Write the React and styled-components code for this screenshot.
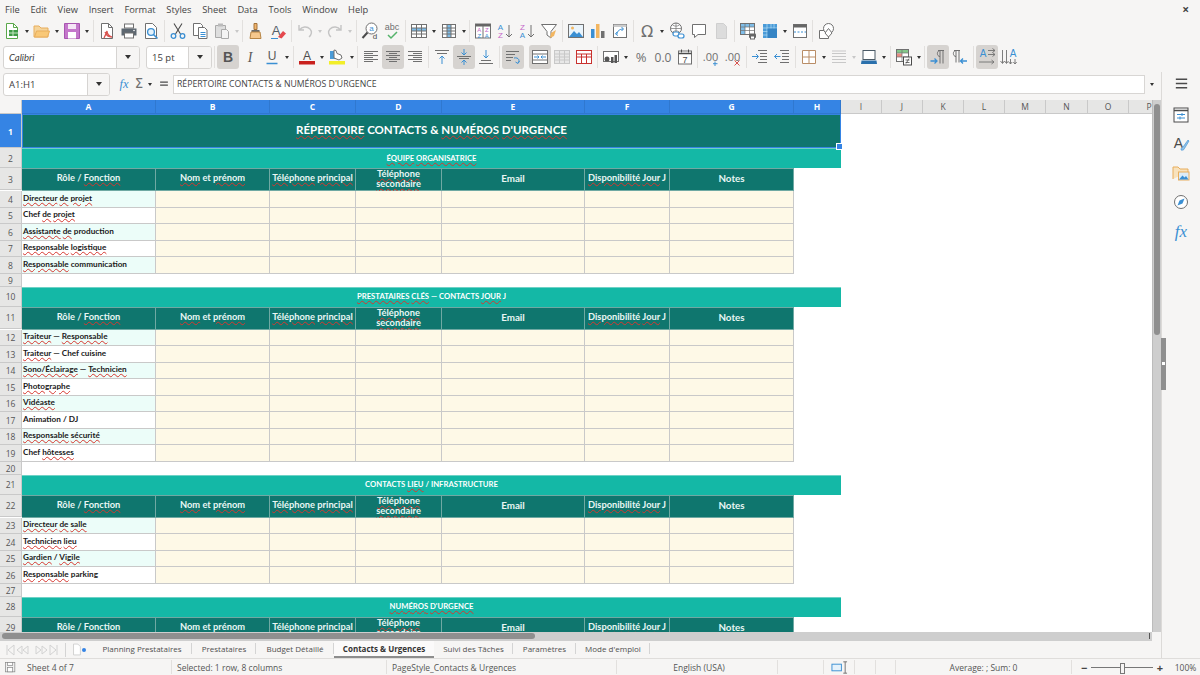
import React from 'react'
import styled, { createGlobalStyle } from 'styled-components'

const BLUE = '#3a8fd3'
const GREY = '#707070'
const DARK = '#4b4b4b'
const LIGHT = '#c4c4c4'
const UI_FONT = '"Open Sans", "Noto Sans", sans-serif'
const SHEET_FONT = 'Lato, "Liberation Sans", sans-serif'

const GlobalStyle = createGlobalStyle`
  html, body { margin: 0; padding: 0; background: #f6f5f4; overflow: hidden; }
  * { box-sizing: border-box; }
`

const Letter = ({ x = 9, y = 13, size = 12, color = DARK, weight = 400, style = 'normal', family = 'Liberation Sans', children }) => (
  <text x={x} y={y} fontSize={size} fill={color} fontWeight={weight} fontStyle={style} fontFamily={family} textAnchor="middle">{children}</text>
)

const TEXT_ROWS = [3.5, 5.5, 7.5, 9.5, 11.5, 13.5]

const ICONS = {
  new: <><path d="M3.5 1.5h7l4 4v11h-11z" fill="#fff" stroke="#5aa84a" /><path d="M10.5 1.5v4h4" fill="none" stroke="#5aa84a" /><rect x="6" y="8" width="9" height="6" fill="#3f9b46" /><path d="M6 11h9M10 8v6" stroke="#c5e6c0" /></>,
  open: <><path d="M1 15V4h5l2 2h7v9z" fill="#f5d49a" stroke="#e8ad5c" /><path d="M1.5 15l2-6h13l-2 6z" fill="#f9c877" stroke="#e8ad5c" /></>,
  save: <><path d="M1.5 1.5h15v15h-15z" fill="#c477cb" stroke="#a855b0" /><rect x="5" y="2" width="8" height="5" fill="#f5e6f6" /><rect x="5" y="10" width="8" height="6.5" fill="#fff" /></>,
  pdf: <><path d="M3.5 1.5h7l4 4v11h-11z" fill="#fff" stroke={GREY} /><path d="M10.5 1.5v4h4" fill="none" stroke={GREY} /><path d="M7 10c2 4 3 5 7 5-3-1-5-3-5-6-1 3-2 5-3 7" fill="none" stroke="#d9534f" strokeWidth="1.3" /></>,
  print: <><rect x="4.5" y="2" width="9" height="4" fill="#fff" stroke={GREY} /><path d="M1.5 6.5h15v7h-15z" fill="#5d6770" /><rect x="4.5" y="11" width="9" height="5" fill="#fff" stroke={GREY} /><circle cx="14" cy="8.5" r=".8" fill="#fff" /></>,
  preview: <><path d="M3.5 1.5h7l4 4v11h-11z" fill="#fff" stroke={GREY} /><circle cx="9" cy="10" r="3.4" fill="#e5f2fb" stroke={BLUE} strokeWidth="1.3" /><path d="M11.5 12.5l4 4" stroke={BLUE} strokeWidth="1.6" /></>,
  cut: <><path d="M5 1.5l6.5 10.5M13 1.5L6.5 12" stroke={DARK} fill="none" strokeWidth="1.1" /><circle cx="4.5" cy="14" r="2.3" fill="none" stroke={BLUE} strokeWidth="1.3" /><circle cx="13.5" cy="14" r="2.3" fill="none" stroke={BLUE} strokeWidth="1.3" /></>,
  copy: <><path d="M2.5 1.5h7l2 2v10h-9z" fill="#fff" stroke={GREY} /><path d="M7.5 5.5h6l2.5 2.5v8.5h-8.5z" fill="#fff" stroke={GREY} /><path d="M9.5 10.5h5M9.5 12.5h5M9.5 14.5h5" stroke={BLUE} /></>,
  paste: <><path d="M2.5 3.5h10v12h-10z" fill="#dedede" stroke="#aaa" /><rect x="5" y="1.5" width="5" height="3" fill="#bbb" /><path d="M8.5 7.5h5l2 2v7h-7z" fill="#f4f4f4" stroke="#aaa" /></>,
  clone: <><path d="M7 1.5h3v6H7z" fill="#f0b46c" stroke="#a4733a" /><path d="M4.5 8h8v2h-8z" fill="#6b6b6b" /><path d="M4 10h9l1 6.5H3z" fill="#f6c88d" stroke="#b78545" /></>,
  clear: <><Letter x={7} y={13} size={13} color="#54606a">A</Letter><path d="M9 15l5-6 3 2.5-4.5 5z" fill="#e5484d" /><path d="M2 16.5h7" stroke={BLUE} /></>,
  undo: <path d="M3 3v5h5M3.5 8C6 4.5 11 4 14 7c2.5 2.5 1.5 6-1 8" fill="none" stroke={LIGHT} strokeWidth="1.4" />,
  redo: <path d="M15 3v5h-5M14.5 8C12 4.5 7 4 4 7c-2.5 2.5-1.5 6 1 8" fill="none" stroke={LIGHT} strokeWidth="1.4" />,
  find: <><circle cx="10.5" cy="6.5" r="5.5" fill="#fff" stroke={GREY} /><path d="M6.5 10.5l-5 5.5" stroke={DARK} strokeWidth="2" /><Letter x={10.5} y={9} size={8} color={BLUE}>a</Letter><Letter x={14} y={17} size={8} color={DARK}>d</Letter></>,
  spell: <><Letter x={9} y={8} size={9} color={GREY}>abc</Letter><path d="M5 13l3 3 6-6" fill="none" stroke="#54b36a" strokeWidth="1.5" /></>,
  grid: <><rect x="1.5" y="2.5" width="15" height="13" fill="#fff" stroke={GREY} /><rect x="2" y="6" width="14" height="3" fill="#7fbde8" /><path d="M1.5 6h15M1.5 9h15M1.5 12h15M6.5 2.5v13M11.5 2.5v13" stroke={GREY} /></>,
  col: <><rect x="2.5" y="2.5" width="13" height="13" fill="#fff" stroke={GREY} /><rect x="7" y="3" width="4" height="12" fill="#7fbde8" /><path d="M2.5 6h13M2.5 9h13M2.5 12h13M7 2.5v13M11 2.5v13" stroke={GREY} /></>,
  sort: <><rect x="1.5" y="2" width="15" height="14" fill="#fff" stroke={GREY} /><rect x="1.5" y="2" width="15" height="2.5" fill="#666" /><path d="M9 4v12" stroke={GREY} /><Letter x={5.3} y={10} size={6} color="#c466c8">A</Letter><Letter x={5.3} y={15.5} size={6} color={BLUE}>Z</Letter><Letter x={12.8} y={10} size={6} color="#c466c8">Z</Letter><Letter x={12.8} y={15.5} size={6} color={BLUE}>A</Letter></>,
  asc: <><Letter x={4.5} y={8} size={8} color={BLUE}>A</Letter><Letter x={4.5} y={16} size={8} color="#c466c8">Z</Letter><path d="M13 3v12M10 12l3 3 3-3" fill="none" stroke={GREY} /></>,
  desc: <><Letter x={4.5} y={8} size={8} color="#c466c8">Z</Letter><Letter x={4.5} y={16} size={8} color={BLUE}>A</Letter><path d="M13 3v12M10 12l3 3 3-3" fill="none" stroke={GREY} /></>,
  filter: <><path d="M1.5 2.5h15l-5.5 7v6.5l-4-3v-3.5z" fill="#fff" stroke={GREY} /><path d="M10 16l1-5 5-3-2 6z" fill="#f2b661" /></>,
  image: <><rect x="1.5" y="2.5" width="15" height="13" fill="#eaf4fb" stroke={GREY} /><circle cx="5.5" cy="6" r="1.5" fill="#f2b661" /><path d="M2 15l5-6 3 3 2-2 4 5z" fill={BLUE} /></>,
  chart: <><rect x="2" y="7" width="3.5" height="9" fill={BLUE} /><rect x="7" y="2" width="3.5" height="14" fill="#f2b661" /><rect x="12" y="9" width="3.5" height="7" fill={GREY} /></>,
  pivot: <><rect x="2.5" y="2.5" width="13" height="13" fill="#fff" stroke={GREY} /><rect x="2.5" y="2.5" width="13" height="2.5" fill="#ccc" /><path d="M6 12c0-3 3-5 6-5M10.5 5l2 2-2 2M6 10l-1.5 2L7 13.5" fill="none" stroke={BLUE} /></>,
  omega: <Letter x={9} y={15} size={16} color={GREY} family="DejaVu Sans">Ω</Letter>,
  link: <><circle cx="8" cy="6.5" r="5.5" fill="#fff" stroke={GREY} /><path d="M2.5 6.5h11M8 1v11M4.5 3c2 1.5 5 1.5 7 0M4.5 10c2-1.5 5-1.5 7 0" stroke={GREY} fill="none" strokeWidth=".7" /><rect x="5" y="10" width="6" height="4" rx="2" fill="#fff" stroke={BLUE} strokeWidth="1.2" /><rect x="10" y="12" width="6" height="4" rx="2" fill="#fff" stroke={BLUE} strokeWidth="1.2" /></>,
  comment: <path d="M2.5 2.5h13v10H8l-3.5 3v-3h-2z" fill="#fff" stroke={GREY} />,
  header: <path d="M4.5 1.5h7l3 3v12h-10z" fill="#dcdcdc" stroke="#cfcfcf" />,
  printArea: <><rect x="1.5" y="1.5" width="14" height="11" fill="#fff" stroke={GREY} /><rect x="2" y="2" width="13" height="3" fill="#7fbde8" /><rect x="2" y="2" width="4" height="10" fill="#7fbde8" /><path d="M1.5 5h14M1.5 8.5h14M6 1.5v11M10.5 1.5v11" stroke={GREY} strokeWidth=".7" /><rect x="10" y="11.5" width="7" height="4.5" rx="1" fill="#666" /><rect x="11.5" y="14" width="4" height="3" fill="#fff" stroke="#666" /></>,
  freeze: <><rect x="2" y="2" width="14" height="14" fill="#4a9bd8" /><path d="M2 6h14M2 9.5h14M2 13h14M6 2v14M10 2v14M13 2v14" stroke="#b6dcf5" strokeWidth=".7" /><rect x="6.5" y="6.5" width="9.5" height="9.5" fill="#3584c4" /></>,
  split: <><rect x="2.5" y="2.5" width="13" height="13" fill="#fff" stroke={GREY} /><rect x="2.5" y="2.5" width="13" height="3" fill="#666" /><path d="M3 10h12" stroke={BLUE} strokeDasharray="2 1.5" /></>,
  shapes: <><path d="M2.5 8.5h9v8h-9z" fill="#fff" stroke={GREY} /><circle cx="11.5" cy="6.5" r="5" fill="#fff" stroke={GREY} /><path d="M8 11l3.5-4.5L15 11l-3.5 4z" fill="#fff" stroke={GREY} /></>,
  bold: <Letter x={9} y={14} size={14} weight={700} color="#555">B</Letter>,
  italic: <Letter x={9} y={14} size={14} color="#5a5a5a" family="Liberation Serif" style="italic">I</Letter>,
  underline: <><Letter x={9} y={12} size={12} color="#5a5a5a">U</Letter><path d="M3.5 15.5h11" stroke={BLUE} strokeWidth="1.5" /></>,
  fontColor: <><Letter x={9} y={11.5} size={12} color={DARK}>A</Letter><rect x="1" y="13" width="16" height="3.5" fill="#c9211e" /></>,
  highlight: <><path d="M2 3h6v8H2z" fill="#4a9bd8" /><path d="M6 10V2l2 .5 1 3 4 1.5 1 3-3 2z" fill="#fff" stroke={GREY} /><rect x="1" y="13" width="16" height="3.5" fill="#f2ee28" /></>,
  alignLeft: TEXT_ROWS.map((y, i) => <path key={i} d={i % 2 ? `M2 ${y}H11` : `M2 ${y}H16`} stroke={GREY} />),
  alignCenter: TEXT_ROWS.map((y, i) => <path key={i} d={i % 2 ? `M5 ${y}H13` : `M2 ${y}H16`} stroke={GREY} />),
  alignRight: TEXT_ROWS.map((y, i) => <path key={i} d={i % 2 ? `M7 ${y}H16` : `M2 ${y}H16`} stroke={GREY} />),
  vTop: <><path d="M2 2.5h14M4 5.5h10" stroke={GREY} /><path d="M9 16V8M6.5 10.5L9 8l2.5 2.5" fill="none" stroke={BLUE} /></>,
  vCenter: <><path d="M2 8.5h14M4 10.5h10" stroke={GREY} /><path d="M9 1v6M6.5 4.5L9 7l2.5-2.5M9 17v-5M6.5 14.5L9 12l2.5 2.5" fill="none" stroke={BLUE} /></>,
  vBottom: <><path d="M2 15.5h14M4 12.5h10" stroke={GREY} /><path d="M9 2v8M6.5 7.5L9 10l2.5-2.5" fill="none" stroke={BLUE} /></>,
  wrap: <><path d="M2 3.5h13M2 6.5h9M2 9.5h7M2 12.5h5" stroke={GREY} /><path d="M10 10c5-1 6 3 4 5M15.5 13l-1.5 2.5-2.5-1.5" fill="none" stroke={BLUE} /></>,
  merge: <><rect x="1.5" y="2.5" width="15" height="13" fill="#fff" stroke={GREY} /><path d="M1.5 6h15M1.5 12h15" stroke={GREY} /><path d="M3 9h5M6.5 7.5L8 9l-1.5 1.5M15 9h-5M11.5 7.5L10 9l1.5 1.5" fill="none" stroke={BLUE} /></>,
  mergeOff: <><rect x="1.5" y="2.5" width="15" height="13" fill="#e8e8e8" stroke="#c8c8c8" /><path d="M1.5 6h15M1.5 9h15M1.5 12h15M6.5 2.5v13M11.5 2.5v13" stroke="#c8c8c8" /></>,
  unmerge: <><rect x="1.5" y="2.5" width="15" height="13" fill="#fff" stroke="#c9312e" /><path d="M1.5 6h15M1.5 9h15M6.5 6v9.5M11.5 6v9.5" stroke="#c9312e" /></>,
  currency: <><rect x="1.5" y="3.5" width="15" height="10" fill="#fff" stroke={GREY} /><circle cx="5" cy="11" r="2.5" fill="#555" /><rect x="9" y="9" width="2.5" height="6" fill="#555" /><rect x="12.5" y="7" width="2.5" height="8" fill="#555" /></>,
  percent: <Letter x={9} y={13.5} size={13} color={GREY} family="Open Sans">%</Letter>,
  number: <Letter x={9} y={13.5} size={12} color={GREY} family="Open Sans">0.0</Letter>,
  date: <><rect x="2.5" y="3" width="13" height="13" fill="#fff" stroke={GREY} /><path d="M2.5 5.5h13" stroke={DARK} strokeWidth="1.5" /><path d="M5.5 1.5v3M12.5 1.5v3" stroke={DARK} /><Letter x={9} y={14.5} size={9} color={DARK}>7</Letter></>,
  decAdd: <><Letter x={8.5} y={13} size={11} color={GREY} family="Open Sans">.00</Letter><path d="M13 13.5v4.5M11 15.7h4.5" stroke={BLUE} /></>,
  decDel: <><Letter x={8.5} y={13} size={11} color={GREY} family="Open Sans">.00</Letter><path d="M10.5 12.5l5 5M15.5 12.5l-5 5" stroke="#d9534f" /></>,
  indent: <><path d="M7 2.5h9M9 5.5h7M9 8.5h7M9 11.5h7M7 14.5h9" stroke={GREY} /><path d="M1 8.5h6M5 6l2.5 2.5L5 11" fill="none" stroke={BLUE} /></>,
  outdent: <><path d="M7 2.5h9M9 5.5h7M9 8.5h7M9 11.5h7M7 14.5h9" stroke={GREY} /><path d="M7.5 8.5h-6M4 6L1.5 8.5 4 11" fill="none" stroke={BLUE} /></>,
  border: <path d="M2.5 2.5h13v13h-13zM9 2.5v13M2.5 9h13" fill="#fff" stroke="#b98d66" />,
  lineStyle: <path d="M2 3h14M2 5.5h14M2 8.5h14M2 11.5h14M2 14.5h14" stroke="#c8c8c8" strokeWidth="1.2" />,
  borderColor: <><rect x="3" y="2.5" width="12" height="9" fill="#fff" stroke="#4b5a66" /><path d="M1.5 12.5h15l.5 3.5H1z" fill="#2a70ac" /></>,
  cond: <><rect x="1.5" y="1.5" width="12" height="12" fill="#fff" stroke={GREY} /><rect x="2" y="2" width="11" height="3" fill="#84c88a" /><rect x="2" y="5.5" width="5" height="3.5" fill="#e88d82" /><path d="M1.5 5h12M1.5 9h12M7 1.5v12" stroke={GREY} strokeWidth=".7" /><rect x="8.5" y="9" width="8" height="8" fill="#fff" stroke={DARK} /><path d="M10.5 12h4M10.5 14.5h4M14 10.5l-3 5" stroke={DARK} strokeWidth=".8" /></>,
  ltr: <><path d="M9 2.5h6M11 2.5v13M14 2.5v13M11 8.5c-3.5 0-3.5-6 0-6" fill="none" stroke={GREY} /><path d="M1.5 13h6M5.5 10.5L8 13l-2.5 2.5" fill="none" stroke={BLUE} strokeWidth="1.3" /></>,
  rtl: <><path d="M3 2.5h6M5 2.5v12M8 2.5v12M5 8.5c-3.5 0-3.5-6 0-6" fill="none" stroke={GREY} /><path d="M16 13h-6M12 10.5L9.5 13l2.5 2.5" fill="none" stroke={BLUE} strokeWidth="1.3" /></>,
  textH: <><Letter x={5} y={9} size={10} color={BLUE}>A</Letter><path d="M10 2.5h7M14.5.5l2.5 2-2.5 2M10 6.500h7M14.5 4.5l2.5 2-2.5 2M1 14h15M13.5 12l2.5 2-2.5 2" fill="none" stroke={GREY} strokeWidth=".9" /></>,
  textV: <><Letter x={13} y={9} size={10} color={BLUE}>A</Letter><path d="M2.5 2v13M.5 13l2 2.5 2-2.5M6.5 2v13M4.5 13l2 2.5 2-2.5M10.5 11v5M8.8 14l1.7 2 1.7-2M15 11v5M13.3 14l1.7 2 1.7-2" fill="none" stroke={GREY} strokeWidth=".9" /></>,
  fx: <Letter x={9} y={14} size={14} color={BLUE} family="Liberation Serif" style="italic">fx</Letter>,
  sum: <Letter x={9} y={14} size={15} color={GREY} family="DejaVu Sans">Σ</Letter>,
  equal: <path d="M4 6.5h10M4 10.5h10" stroke={DARK} strokeWidth="1.5" />,
  menu: <path d="M3 4.5h12M3 9h12M3 13.5h12" stroke={DARK} strokeWidth="1.5" />,
  properties: <><rect x="2" y="2" width="14" height="14" fill="#fff" stroke={DARK} /><path d="M2 4.5h14" stroke={DARK} strokeWidth="1.5" /><path d="M5 8.5h8M5 12h8" stroke={BLUE} /><path d="M10 7v3M8 10.5v3" stroke={BLUE} /></>,
  styles: <><Letter x={6.5} y={13} size={14} color={DARK}>A</Letter><path d="M9 15c0-2 1-3 2-3l5-7 1 1-4.5 7.5c-.5 1.5-2 2-3.5 1.5z" fill="#8ec1e8" stroke={BLUE} strokeWidth=".6" /></>,
  gallery: <><path d="M1 15V3h5l2 2h8v3" fill="#f8e2bd" stroke="#e8ad5c" /><rect x="6.5" y="8" width="10.5" height="8" fill="#dcecf8" stroke="#e8ad5c" /><path d="M7 15.5l3.5-4 2 2 1.5-1.5 2.5 3.5z" fill={BLUE} /></>,
  navigator: <><circle cx="9" cy="9" r="6.5" fill="#fff" stroke={GREY} /><path d="M12.5 5.5L10.5 10.5 5.5 12.5 7.5 7.5z" fill={BLUE} /></>,
  sideFx: <Letter x={9} y={15} size={17} color={BLUE} family="Liberation Serif" style="italic">fx</Letter>,
  saved: <><rect x="2" y="2" width="13" height="13" fill="#f0f0f0" stroke="#8a8a8a" /><rect x="5" y="2" width="7" height="4" fill="#fff" stroke="#8a8a8a" /><rect x="5" y="9" width="7" height="6" fill="#fff" stroke="#8a8a8a" /></>,
  sheetNew: <path d="M3.5 1.5h6l3.5 3.5v11.500h-9.5z" fill="#fff" stroke={LIGHT} />,
  selection: <><rect x="1" y="5.5" width="10" height="7" fill="#e5f2fb" stroke={BLUE} /><path d="M13 3h4M13 15h4M15 3v12" stroke={GREY} /></>,
}

const TOP_TOOLS = ['new', 'v', 'open', 'v', 'save', 'v', '|', 'pdf', 'print', 'preview', '|', 'cut', 'copy', 'paste', 'v-', '|', 'clone', 'clear', '|', 'undo', 'v-', 'redo', 'v-', '|', 'find', 'spell', '|', 'grid', 'v', 'col', 'v', '|', 'sort', 'asc', 'desc', 'filter', '|', 'image', 'chart', 'pivot', '|', 'omega', 'v', 'link', 'comment', 'header', '|', 'printArea', 'freeze', 'v', 'split', '|', 'shapes']
const FORMAT_TOOLS = ['|', '*bold', 'italic', 'underline', 'v', '|', 'fontColor', 'v', 'highlight', 'v', '|', 'alignLeft', '*alignCenter', 'alignRight', '|', 'vTop', '*vCenter', 'vBottom', '|', '*wrap', '_', '*merge', 'mergeOff', 'unmerge', '|', 'currency', 'v', 'percent', 'number', 'date', '|', 'decAdd', 'decDel', '|', 'indent', 'outdent', '|', 'border', 'v', 'lineStyle', 'v-', 'borderColor', 'v', '|', 'cond', 'v', '|', '*ltr', 'rtl', '|', '*textH', 'textV']

const Page = styled.div`
  width: 1200px;
  height: 675px;
  display: flex;
  flex-direction: column;
  background: #f6f5f4;
  font-family: ${UI_FONT};
  color: #3d3d3d;
  overflow: hidden;
`
const MenuBar = styled.div`
  height: 18px;
  display: flex;
  align-items: center;
  padding: 0 5px;
  font-size: 9.3px;
  color: #444;
`
const MenuItem = styled.span`
  margin-right: 10.7px;
`
const CloseMark = styled.span`
  margin-left: auto;
  margin-right: 6px;
  font-size: 12px;
  font-weight: 700;
`
const ToolRow = styled.div`
  height: ${p => p.$h}px;
  display: flex;
  align-items: center;
  padding-left: ${p => p.$pad}px;
  padding-bottom: ${p => p.$lift || 0}px;
`
const ToolBtn = styled.div`
  width: 22px;
  height: 24px;
  flex: none;
  display: flex;
  align-items: center;
  justify-content: center;
  border-radius: 3px;
  background: ${p => (p.$on ? '#d6d3d0' : 'transparent')};
`
const Ico = styled.svg`
  width: ${p => p.$size || 18}px;
  height: ${p => p.$size || 18}px;
  display: block;
  flex: none;
  overflow: visible;
`
const Drop = styled.div`
  width: 8px;
  flex: none;
  display: flex;
  justify-content: center;
  &::after {
    content: '';
    border: 2.5px solid transparent;
    border-top: 3px solid ${p => (p.$off ? '#c8c8c8' : '#333')};
    border-bottom: 0;
  }
`
const Sep = styled.div`
  width: ${p => (p.$blank ? 5 : 4.75)}px;
  height: 22px;
  flex: none;
  display: flex;
  justify-content: center;
  &::after {
    content: '';
    width: 1px;
    background: ${p => (p.$blank ? 'transparent' : '#e2e0de')};
  }
`
const Combo = styled.div`
  width: ${p => p.$w}px;
  height: 23px;
  margin-right: ${p => p.$gap || 0}px;
  flex: none;
  display: flex;
  border: 1px solid #d6d4d2;
  border-radius: 3px;
  background: #fff;
  overflow: hidden;
`
const ComboText = styled.div`
  flex: 1;
  padding-left: 5px;
  font: ${p => (p.$italic ? 'italic' : 'normal')} 9.5px ${p => (p.$italic ? SHEET_FONT : UI_FONT)};
  line-height: 21px;
  color: #3d3d3d;
`
const ComboArrow = styled.div`
  width: ${p => p.$w}px;
  flex: none;
  background: #f6f5f4;
  border-left: 1px solid #d6d4d2;
  display: flex;
  align-items: center;
  justify-content: center;
  &::after {
    content: '';
    border: 3.5px solid transparent;
    border-top: 4px solid #333;
    border-bottom: 0;
  }
`
const Body = styled.div`
  flex: 1;
  min-height: 0;
  display: flex;
`
const WorkArea = styled.div`
  width: 1161px;
  flex: none;
  display: flex;
  flex-direction: column;
`
const FormulaBar = styled.div`
  height: 28px;
  flex: none;
  display: flex;
  align-items: center;
  padding: 0 0 4px 3px;
`
const FormulaTools = styled.div`
  display: flex;
  align-items: center;
  margin-left: 6px;
  width: 57px;
  flex: none;
`
const SmallBtn = styled.div`
  width: ${p => p.$w}px;
  display: flex;
  justify-content: center;
  flex: none;
`
const FormulaInput = styled.div`
  width: 972px;
  height: 19px;
  flex: none;
  background: #fff;
  border: 1px solid #d8d6d4;
  padding-left: 3px;
  font-size: 8.7px;
  line-height: 17px;
  color: #444;
`
const SheetFrame = styled.div`
  height: 532px;
  flex: none;
  display: flex;
  overflow: hidden;
`
const SheetGrid = styled.div`
  width: 1152px;
  flex: none;
  display: grid;
  grid-template-columns: 22px 134px 114px 86px 86px 143px 85px 124px 47px 41px 41px 41px 41px 41px 42px 41px 41px;
  align-content: start;
  overflow: hidden;
  background: #fff;
  font-family: ${SHEET_FONT};
`
const HeadCell = styled.div`
  height: 14px;
  background: ${p => (p.$on ? '#3584e4' : '#e6e6e5')};
  color: ${p => (p.$on ? '#fff' : '#555')};
  font: ${p => (p.$on ? 700 : 400)} 8.5px ${UI_FONT};
  line-height: 13px;
  text-align: center;
  border-right: 1px solid ${p => (p.$on ? '#2f78d0' : '#c9c9c9')};
  border-bottom: 1px solid ${p => (p.$on ? '#2f78d0' : '#c9c9c9')};
`
const Corner = styled(HeadCell)`
  background: #f6f5f4;
`
const RowHead = styled.div`
  height: ${p => p.$h}px;
  background: ${p => (p.$on ? '#3584e4' : '#e6e6e5')};
  color: ${p => (p.$on ? '#fff' : '#555')};
  font: ${p => (p.$on ? 700 : 400)} 8.5px ${UI_FONT};
  border-right: 1px solid #c9c9c9;
  border-bottom: 1px solid #c9c9c9;
  display: flex;
  align-items: center;
  justify-content: center;
  padding-top: 1px;
`
const Blank = styled.div`
  grid-column: ${p => p.$span};
`
const TitleCell = styled.div`
  grid-column: span 8;
  position: relative;
  background: #0f766e;
  color: #fff;
  font-size: 11.5px;
  font-weight: 700;
  display: flex;
  align-items: center;
  justify-content: center;
  padding-bottom: 3px;
  outline: 1px solid #3584e4;
  outline-offset: -1px;
  border: 1px solid #9fd6ee;
  &::after {
    content: '';
    position: absolute;
    right: -3px;
    bottom: -3px;
    width: 5px;
    height: 5px;
    background: #3584e4;
    border: 1px solid #fff;
  }
`
const Banner = styled.div`
  grid-column: span 8;
  background: #14b8a6;
  color: #fff;
  font-size: 7.7px;
  font-weight: 700;
  display: flex;
  align-items: center;
  justify-content: center;
  padding-bottom: 2px;
  border-top: 1px solid #6fd2c6;
`
const ColTitle = styled.div`
  background: #0f766e;
  color: #e9f6f4;
  font-size: ${p => (p.$big ? 9.8 : 9.3)}px;
  font-weight: 700;
  line-height: 10px;
  text-align: center;
  display: flex;
  align-items: center;
  justify-content: center;
  padding-bottom: ${p => (p.$two ? 1 : 3)}px;
  border-right: 1px solid #6fa9a3;
  border-top: 1px solid #6fa9a3;
  border-bottom: 1px solid #6fa9a3;
`
const Label = styled.div`
  background: ${p => (p.$tint ? '#ecfdf9' : '#fff')};
  color: #1a1a1a;
  font-size: 8.2px;
  font-weight: 700;
  display: flex;
  align-items: center;
  padding-left: 1px;
  padding-bottom: 2px;
  border-right: 1px solid #c9c9c9;
  border-bottom: 1px solid #c9c9c9;
  white-space: pre;
`
const Entry = styled.div`
  background: #fef9e7;
  border-right: 1px solid #c9c9c9;
  border-bottom: 1px solid #c9c9c9;
`
const Wavy = styled.span`
  text-decoration: underline wavy #d6372f 0.6px;
  text-underline-offset: 0.5px;
`
const VScroll = styled.div`
  width: 9px;
  flex: none;
  background: #cecece;
  padding: 4px 1px 0;
  border-left: 1px solid #bcbcbc;
`
const VThumb = styled.div`
  width: 6px;
  height: 231px;
  background: #8f8f8f;
  border-radius: 3px;
`
const HScroll = styled.div`
  height: 9px;
  width: 1152px;
  flex: none;
  position: relative;
  background: #cecece;
  padding: 1px 2px;
  &::after {
    content: '';
    position: absolute;
    right: 2px;
    top: 1px;
    width: 1px;
    height: 6px;
    background: #555;
  }
`
const HThumb = styled.div`
  width: 533px;
  height: 6px;
  background: #8f8f8f;
  border-radius: 3px;
`
const TabBar = styled.div`
  height: 17px;
  flex: none;
  display: flex;
  align-items: center;
  font-size: 8px;
  color: #505050;
`
const TabNav = styled.div`
  width: 66px;
  height: 14px;
  flex: none;
  padding-left: 5px;
  display: flex;
  align-items: center;
  border-right: 1px solid #d4d4d4;
`
const NavSvg = styled.svg`
  width: 54px;
  height: 12px;
  display: block;
`
const AddTab = styled.div`
  width: 26px;
  flex: none;
  position: relative;
  padding-left: 5px;
  &::after {
    content: '';
    position: absolute;
    left: 16px;
    top: 5px;
    width: 4px;
    height: 4px;
    border-radius: 50%;
    background: #3584e4;
  }
`
const Tab = styled.div`
  width: ${p => p.$w}px;
  height: 17px;
  flex: none;
  text-align: center;
  line-height: 16px;
  white-space: nowrap;
  position: relative;
  font-weight: ${p => (p.$on ? 700 : 400)};
  color: ${p => (p.$on ? '#333' : '#505050')};
  background: ${p => (p.$on ? '#fbfafa' : 'transparent')};
  border-bottom: 2px solid ${p => (p.$on ? '#8d8d8d' : 'transparent')};
  &::after {
    content: '';
    position: absolute;
    right: 0;
    top: 2px;
    height: 11px;
    width: 1px;
    background: ${p => (p.$on ? 'transparent' : '#d4d4d4')};
  }
`
const Sidebar = styled.div`
  flex: 1;
  position: relative;
  border-left: 1px solid #dcdad8;
  display: flex;
  flex-direction: column;
  align-items: center;
  padding-top: 3px;
  gap: 11px;
`
const SideFirst = styled.div`
  margin-bottom: 3px;
`
const DeckHandle = styled.div`
  position: absolute;
  left: -1px;
  top: 266px;
  width: 5px;
  height: 52px;
  background: #8f8f8f;
  &::after {
    content: '';
    position: absolute;
    left: 1px;
    top: 24px;
    width: 3px;
    height: 3px;
    background: #fff;
  }
`
const StatusBar = styled.div`
  height: 17px;
  flex: none;
  display: grid;
  grid-template-columns: 22px 150px 215px 230px 161px 46px 31px 21px 20px 176px 100px 1fr;
  align-items: center;
  border-top: 1px solid #dfdddb;
  font-size: 8.5px;
  color: #555;
`
const StatusCell = styled.div`
  height: 14px;
  display: flex;
  align-items: center;
  white-space: nowrap;
  justify-content: ${p => (p.$center ? 'center' : 'flex-start')};
  padding-left: ${p => (p.$center ? 0 : 5)}px;
  border-right: 1px solid ${p => (p.$plain ? 'transparent' : '#e2e0de')};
`
const LanguageCell = styled(StatusCell)`
  padding-left: 4px;
`
const ZoomCell = styled.div`
  height: 14px;
  display: flex;
  align-items: center;
  padding: 0 9px;
`
const ZoomTrack = styled.div`
  flex: 1;
  height: 1px;
  margin: 0 4px;
  background: #777;
  position: relative;
  &::after {
    content: '';
    position: absolute;
    left: calc(50% - 2px);
    top: -4px;
    width: 3px;
    height: 9px;
    background: #f6f5f4;
    border: 1px solid #777;
  }
`
const ZoomSign = styled.span`
  font-size: 11px;
  font-weight: 700;
  color: #444;
`

const Icon = ({ name, size }) => (
  <Ico $size={size} viewBox="0 0 18 18">{ICONS[name]}</Ico>
)

const Tools = ({ items }) => items.map((item, i) => {
  if (item === '|') return <Sep key={i} />
  if (item === '_') return <Sep key={i} $blank />
  if (item === 'v') return <Drop key={i} />
  if (item === 'v-') return <Drop key={i} $off />
  const on = item[0] === '*'
  return (
    <ToolBtn key={i} $on={on}>
      <Icon name={on ? item.slice(1) : item} size={18} />
    </ToolBtn>
  )
})

const MISSPELT = new Set(['RÉPERTOIRE', 'NUMÉROS', "D'URGENCE", 'ÉQUIPE', 'ORGANISATRICE', 'PRESTATAIRES', 'CLÉS', 'JOUR', 'LIEU', 'Fonction', 'Nom', 'prénom', 'Téléphone', 'principal', 'secondaire', 'Disponibilité', 'Jour', 'Directeur', 'de', 'projet', 'Assistante', 'Responsable', 'logistique', 'Traiteur', 'Sono/Éclairage', 'Technicien', 'Photographe', 'Vidéaste', 'sécurité', 'hôtesses', 'salle', 'Gardien', 'Vigile', 'lieu'])

const Checked = ({ text }) => text.split(' ').map((word, i) => (
  <React.Fragment key={i}>
    {i > 0 && ' '}
    {MISSPELT.has(word) ? <Wavy>{word}</Wavy> : word}
  </React.Fragment>
))

const COLUMN_TITLES = ['Rôle / Fonction', 'Nom et prénom', 'Téléphone principal', 'Téléphone secondaire', 'Email', 'Disponibilité Jour J', 'Notes']

const SECTIONS = [
  { start: 2, title: 'ÉQUIPE ORGANISATRICE', roles: ['Directeur de projet', 'Chef de projet', 'Assistante de production', 'Responsable logistique', 'Responsable communication'] },
  { start: 10, title: 'PRESTATAIRES CLÉS — CONTACTS JOUR J', roles: ['Traiteur — Responsable', 'Traiteur — Chef cuisine', 'Sono/Éclairage — Technicien', 'Photographe', 'Vidéaste', 'Animation / DJ', 'Responsable sécurité', 'Chef hôtesses'] },
  { start: 21, title: 'CONTACTS LIEU / INFRASTRUCTURE', roles: ['Directeur de salle', 'Technicien lieu', 'Gardien / Vigile', 'Responsable parking'] },
  { start: 28, title: "NUMÉROS D'URGENCE", roles: [] },
]

const Section = ({ section }) => {
  const { start, title, roles } = section
  return (
    <>
      <RowHead $h={20}>{start}</RowHead>
      <Banner><span><Checked text={title} /></span></Banner>
      <Blank $span="span 8" />
      <RowHead $h={22}>{start + 1}</RowHead>
      {COLUMN_TITLES.map((t, i) => (
        <ColTitle key={t} $big={t === 'Email' || t === 'Notes'} $two={i === 3}>
          <span><Checked text={t} /></span>
        </ColTitle>
      ))}
      <Blank $span="span 9" />
      {roles.map((role, r) => (
        <React.Fragment key={role}>
          <RowHead $h={16.5}>{start + 2 + r}</RowHead>
          <Label $tint={r % 2 === 0}><span><Checked text={role} /></span></Label>
          {[0, 1, 2, 3, 4, 5].map(c => <Entry key={c} />)}
          <Blank $span="span 9" />
        </React.Fragment>
      ))}
      {roles.length > 0 && (
        <>
          <RowHead $h={13}>{start + 2 + roles.length}</RowHead>
          <Blank $span="span 16" />
        </>
      )}
    </>
  )
}

export default function App() {
  return (
    <Page>
      <GlobalStyle />
      <MenuBar>
        {['File', 'Edit', 'View', 'Insert', 'Format', 'Styles', 'Sheet', 'Data', 'Tools', 'Window', 'Help'].map(m => <MenuItem key={m}>{m}</MenuItem>)}
        <CloseMark>×</CloseMark>
      </MenuBar>
      <ToolRow $h={26} $pad={1}>
        <Tools items={TOP_TOOLS} />
      </ToolRow>
      <ToolRow $h={28} $pad={3} $lift={2}>
        <Combo $w={137} $gap={6}>
          <ComboText $italic>Calibri</ComboText>
          <ComboArrow $w={23} />
        </Combo>
        <Combo $w={66}>
          <ComboText>15 pt</ComboText>
          <ComboArrow $w={23} />
        </Combo>
        <Tools items={FORMAT_TOOLS} />
      </ToolRow>
      <Body>
        <WorkArea>
          <FormulaBar>
            <Combo $w={107}>
              <ComboText>A1:H1</ComboText>
              <ComboArrow $w={22} />
            </Combo>
            <FormulaTools>
              <SmallBtn $w={16}><Icon name="fx" size={16} /></SmallBtn>
              <SmallBtn $w={14}><Icon name="sum" size={16} /></SmallBtn>
              <Drop />
              <SmallBtn $w={19}><Icon name="equal" size={14} /></SmallBtn>
            </FormulaTools>
            <FormulaInput>RÉPERTOIRE CONTACTS &amp; NUMÉROS D'URGENCE</FormulaInput>
            <SmallBtn $w={14}><Drop /></SmallBtn>
          </FormulaBar>
          <SheetFrame>
            <SheetGrid>
              <Corner />
              {['A', 'B', 'C', 'D', 'E', 'F', 'G', 'H'].map(c => <HeadCell key={c} $on>{c}</HeadCell>)}
              {['I', 'J', 'K', 'L', 'M', 'N', 'O', 'P'].map(c => <HeadCell key={c}>{c}</HeadCell>)}
              <RowHead $h={34} $on>1</RowHead>
              <TitleCell><span><Checked text="RÉPERTOIRE CONTACTS & NUMÉROS D'URGENCE" /></span></TitleCell>
              <Blank $span="span 8" />
              {SECTIONS.map(s => <Section key={s.start} section={s} />)}
            </SheetGrid>
            <VScroll><VThumb /></VScroll>
          </SheetFrame>
          <HScroll><HThumb /></HScroll>
          <TabBar>
            <TabNav>
              <NavSvg viewBox="0 0 54 12">
                <path d="M2 1v10M9 1L3 6l6 5zM17 2l-5 4 5 4zM23 2l-5 4 5 4zM31 2l5 4-5 4zM37 2l5 4-5 4zM45 1l6 5-6 5zM52 1v10" fill="none" stroke="#d2d2d2" />
              </NavSvg>
            </TabNav>
            <AddTab><Icon name="sheetNew" size={13} /></AddTab>
            <Tab $w={100}>Planning Prestataires</Tab>
            <Tab $w={64}>Prestataires</Tab>
            <Tab $w={78}>Budget Détaillé</Tab>
            <Tab $w={100} $on>Contacts &amp; Urgences</Tab>
            <Tab $w={79}>Suivi des Tâches</Tab>
            <Tab $w={63}>Paramètres</Tab>
            <Tab $w={74}>Mode d'emploi</Tab>
          </TabBar>
        </WorkArea>
        <Sidebar>
          <DeckHandle />
          <SideFirst><Icon name="menu" size={17} /></SideFirst>
          <Icon name="properties" size={18} />
          <Icon name="styles" size={18} />
          <Icon name="gallery" size={18} />
          <Icon name="navigator" size={18} />
          <Icon name="sideFx" size={18} />
        </Sidebar>
      </Body>
      <StatusBar>
        <StatusCell $plain $center><Icon name="saved" size={13} /></StatusCell>
        <StatusCell>Sheet 4 of 7</StatusCell>
        <StatusCell>Selected: 1 row, 8 columns</StatusCell>
        <StatusCell>PageStyle_Contacts &amp; Urgences</StatusCell>
        <LanguageCell $center>English (USA)</LanguageCell>
        <StatusCell />
        <StatusCell $center><Icon name="selection" size={17} /></StatusCell>
        <StatusCell />
        <StatusCell />
        <StatusCell $center>Average: ; Sum: 0</StatusCell>
        <ZoomCell>
          <ZoomSign>−</ZoomSign><ZoomTrack /><ZoomSign>+</ZoomSign>
        </ZoomCell>
        <StatusCell $plain $center>100%</StatusCell>
      </StatusBar>
    </Page>
  )
}
